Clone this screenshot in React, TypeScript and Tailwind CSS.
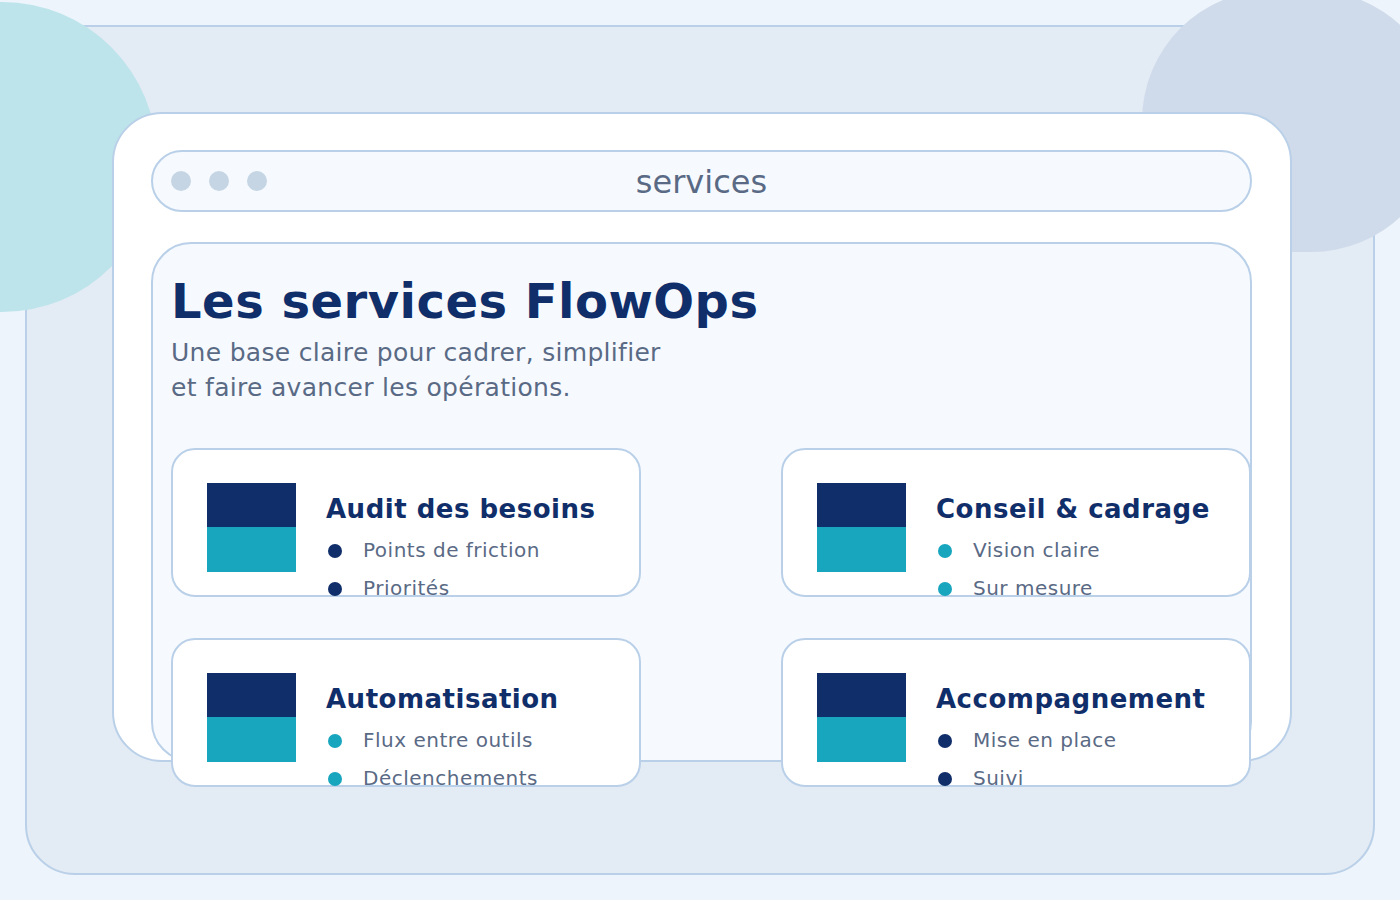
import React from "react";

const navy = "#102e6a";

function Card({ title, items, dot }: { title: string; items: string[]; dot: string }) {
  return (
    <div className="h-[149px] rounded-[24px] border-2 border-[#b9d0e8] bg-white flex items-start pt-[33px] pl-[34px]">
      <div className="w-[89px] h-[89px] flex flex-col shrink-0">
        <div className="h-[44px] bg-[#102e6a]" />
        <div className="flex-1 bg-[#17a6be]" />
      </div>
      <div className="ml-[30px] pt-[13px]">
        <div className="text-[26px] leading-[26px] font-bold text-[#102e6a] tracking-[0.5px] whitespace-nowrap">{title}</div>
        <div className="mt-[9px]">
          {items.map((t) => (
            <div key={t} className="flex items-center h-[38px] text-[20px] text-[#5a6a85] tracking-[0.5px] whitespace-nowrap">
              <span className="w-[14px] h-[14px] rounded-full ml-[2px] mr-[21px] mt-[2px]" style={{ background: dot }} />
              {t}
            </div>
          ))}
        </div>
      </div>
    </div>
  );
}

export default function App() {
  return (
    <div className="w-[1400px] h-[900px] bg-[#edf4fb] p-[25px] overflow-hidden" style={{ fontFamily: '"DejaVu Sans", sans-serif' }}>
      <div className="relative w-[1350px] h-[850px] rounded-[50px] border-2 border-[#b9d0e8] bg-[#e3ebf5] pt-[85px] pl-[85px]">
        <div className="absolute left-[-180px] top-[-25px] w-[310px] h-[310px] rounded-full bg-[#bee4eb]" />
        <div className="absolute left-[1115px] top-[-37px] w-[300px] h-[262px] rounded-full bg-[#cfdbea]" />
        <div className="relative w-[1180px] h-[650px] rounded-[50px] border-2 border-[#b9d0e8] bg-white pt-[36px] pl-[37px]">
          <div className="relative w-[1101px] h-[62px] rounded-full border-2 border-[#b9d0e8] bg-[#f6faff] flex items-center pl-[18px] gap-[18px]">
            <span className="w-[20px] h-[20px] rounded-full bg-[#c5d5e4]" />
            <span className="w-[20px] h-[20px] rounded-full bg-[#c5d5e4]" />
            <span className="w-[20px] h-[20px] rounded-full bg-[#c5d5e4]" />
            <div className="absolute inset-0 flex items-center justify-center pt-[2px] text-[32px] text-[#5a6a85]">services</div>
          </div>
          <div className="mt-[30px] w-[1101px] h-[520px] rounded-[40px] border-2 border-[#b9d0e8] bg-[#f6faff] pt-[33px] pl-[18px]">
            <div className="text-[48px] leading-[48px] font-bold tracking-[0.5px]" style={{ color: navy }}>Les services FlowOps</div>
            <div className="mt-[10px] text-[25px] leading-[35px] text-[#5a6a85] tracking-[0.3px]">
              Une base claire pour cadrer, simplifier<br />et faire avancer les opérations.
            </div>
            <div className="mt-[43px] grid grid-cols-[470px_470px] gap-x-[140px] gap-y-[41px]">
              <Card title="Audit des besoins" items={["Points de friction", "Priorités"]} dot="#102e6a" />
              <Card title="Conseil & cadrage" items={["Vision claire", "Sur mesure"]} dot="#17a6be" />
              <Card title="Automatisation" items={["Flux entre outils", "Déclenchements"]} dot="#17a6be" />
              <Card title="Accompagnement" items={["Mise en place", "Suivi"]} dot="#102e6a" />
            </div>
          </div>
        </div>
      </div>
    </div>
  );
}
